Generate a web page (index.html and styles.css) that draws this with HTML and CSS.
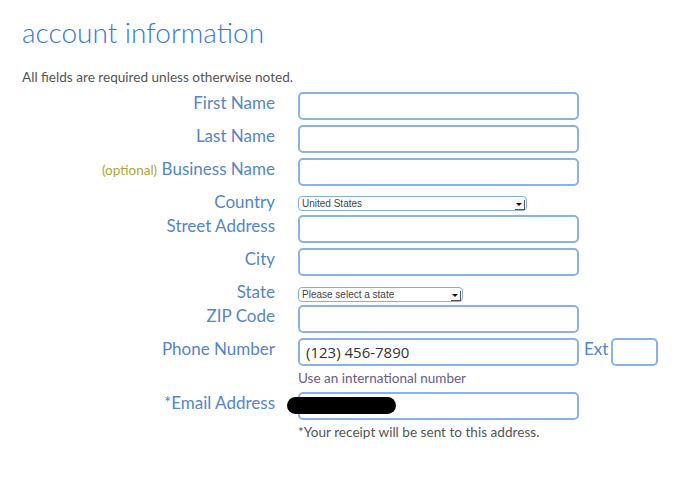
FILE: index.html
```html
<!DOCTYPE html>
<html>
<head>
  <meta charset="UTF-8">
  <title>Account Information</title>
  <link rel="stylesheet" href="styles.css">
</head>
<body>
  <h1 class="title">account information</h1>
  <p class="note">All fields are required unless otherwise noted.</p>

  <form class="account-form">
    <div class="row">
      <label class="label" for="first-name">First Name</label>
      <input class="field" type="text" id="first-name">
    </div>
    <div class="row">
      <label class="label" for="last-name">Last Name</label>
      <input class="field" type="text" id="last-name">
    </div>
    <div class="row">
      <label class="label" for="business"><span class="optional">(optional)</span> Business Name</label>
      <input class="field" type="text" id="business">
    </div>
    <div class="row select-row country-row">
      <label class="label">Country</label>
      <div class="select country-select">
        <span class="select-text">United States</span>
        <span class="select-arrow"></span>
      </div>
    </div>
    <div class="row">
      <label class="label" for="street">Street Address</label>
      <input class="field" type="text" id="street">
    </div>
    <div class="row">
      <label class="label" for="city">City</label>
      <input class="field" type="text" id="city">
    </div>
    <div class="row select-row state-row">
      <label class="label">State</label>
      <div class="select state-select">
        <span class="select-text">Please select a state</span>
        <span class="select-arrow"></span>
      </div>
    </div>
    <div class="row">
      <label class="label" for="zip">ZIP Code</label>
      <input class="field" type="text" id="zip">
    </div>
    <div class="row phone-row">
      <label class="label" for="phone">Phone Number</label>
      <input class="field phone" type="text" id="phone" value="(123) 456-7890">
      <span class="ext-label">Ext</span>
      <input class="field ext" type="text">
    </div>
    <div class="hint">Use an international number</div>
    <div class="row email-row">
      <label class="label" for="email">*Email Address</label>
      <input class="field" type="text" id="email">
      <span class="redacted"></span>
    </div>
    <div class="receipt">*Your receipt will be sent to this address.</div>
  </form>
</body>
</html>
```

FILE: styles.css
```css
body {
  font-family: Lato, "Open Sans", sans-serif;
  background-color: #ffffff;
  margin: 0;
  padding: 0;
}

.title {
  margin: 17px 0 0 22px;
  font-size: 28px;
  line-height: 31px;
  font-weight: 300;
  color: #3b78d6;
}

.note {
  margin: 21px 0 0 22px;
  font-size: 13.6px;
  line-height: 16px;
  color: #555555;
}

.account-form {
  margin-top: 7px;
}

.row {
  position: relative;
  display: flex;
  align-items: flex-start;
  margin-bottom: 5px;
}

.label {
  width: 275px;
  margin-right: 23px;
  padding-top: 1px;
  text-align: right;
  font-size: 17px;
  line-height: 20px;
  color: #5585cb;
}

.optional {
  font-size: 13.5px;
  color: #b3a531;
}

.field {
  box-sizing: border-box;
  width: 281px;
  height: 28px;
  margin: 0;
  padding: 0 6px;
  border: 2px solid #8cb1e4;
  border-radius: 5px;
  font-family: "Open Sans", sans-serif;
  font-size: 15px;
  color: #333333;
  background: #ffffff;
}

.select-row {
  height: 24px;
  margin-bottom: 0;
}

.select {
  box-sizing: border-box;
  display: flex;
  align-items: center;
  justify-content: space-between;
  height: 15px;
  padding: 0 2px 0 3px;
  border: 1px solid #86aee3;
  border-radius: 4px;
  background: #ffffff;
  font-family: "Liberation Sans", Arial, sans-serif;
  font-size: 10px;
  color: #444444;
}

.country-row .select {
  margin-top: 5px;
}

.state-row .select {
  margin-top: 6px;
}

.country-select {
  width: 229px;
}

.state-select {
  width: 165px;
}

.select-arrow {
  position: relative;
  width: 10px;
  height: 10px;
  background: #f6f6f6;
  box-shadow: 1px 1px 0 #555555;
}

.select-arrow::after {
  content: "";
  position: absolute;
  left: 2px;
  top: 4px;
  border-left: 3px solid transparent;
  border-right: 3px solid transparent;
  border-top: 3px solid #111111;
}

.phone-row {
  margin-bottom: 0;
}

.ext-label {
  margin-left: 5px;
  margin-right: 3px;
  padding-top: 1px;
  font-size: 17px;
  line-height: 20px;
  color: #5585cb;
}

.ext {
  width: 47px;
}

.hint {
  margin: 4px 0 6px 298px;
  font-size: 13.5px;
  line-height: 16px;
  color: #6a5a8c;
}

.email-row {
  margin-bottom: 0;
}

.redacted {
  position: absolute;
  left: 287px;
  top: 5px;
  width: 109px;
  height: 17px;
  border-radius: 9px;
  background: #000000;
}

.receipt {
  margin: 4px 0 0 298px;
  font-size: 13.6px;
  line-height: 16px;
  color: #555555;
}
```
